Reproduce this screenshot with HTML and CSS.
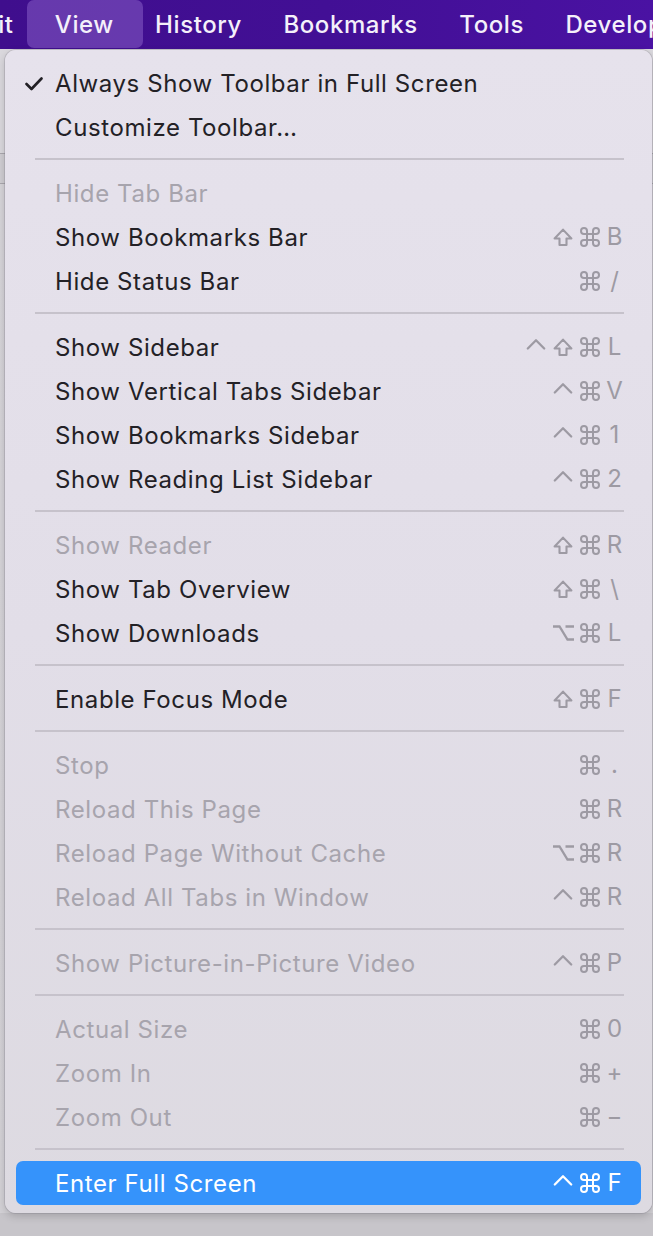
FILE: index.html
```html
<!DOCTYPE html>
<html lang="en">
<head>
<meta charset="utf-8">
<title>View menu</title>
<link rel="stylesheet" href="styles.css">
</head>
<body>
<svg width="0" height="0" class="defs">
  <defs>
    <symbol id="cmd" viewBox="2 2.5 20 19"><path d="M15 6v12a3 3 0 1 0 3-3H6a3 3 0 1 0 3 3V6a3 3 0 1 0-3 3h12a3 3 0 1 0-3-3z" fill="none" stroke="currentColor" stroke-width="2" stroke-linejoin="round"/></symbol>
    <symbol id="shift" viewBox="0 0 20 20"><path d="M6.5 18v-6.5H1.6L10 2.6l8.4 8.9h-4.9V18z" fill="none" stroke="currentColor" stroke-width="2.1" stroke-linejoin="round"/></symbol>
    <symbol id="ctrl" viewBox="0 0 20 20"><polyline points="1.8,11.5 10,3.3 18.2,11.5" fill="none" stroke="currentColor" stroke-width="2.3" stroke-linecap="round" stroke-linejoin="round"/></symbol>
    <symbol id="opt" viewBox="0 0 23 20"><path d="M1 3.5h6.5l8 13H22M13.5 3.5H22" fill="none" stroke="currentColor" stroke-width="2.3" stroke-linejoin="miter"/></symbol>
    <symbol id="check" viewBox="0 0 18 14"><polyline points="1.5,7 6.5,12 16.5,1.5" fill="none" stroke="currentColor" stroke-width="2.6" stroke-linecap="round" stroke-linejoin="round"/></symbol>
  </defs>
</svg>

<header class="menubar">
  <span class="mb-item mb-edit">Edit</span>
  <span class="mb-item mb-active">View</span>
  <span class="mb-item">History</span>
  <span class="mb-item">Bookmarks</span>
  <span class="mb-item">Tools</span>
  <span class="mb-item">Develop</span>
</header>

<main class="desk">
  <div class="menu">
    <div class="row"><span class="chk"><svg class="check"><use href="#check"/></svg></span><span class="label">Always Show Toolbar in Full Screen</span><span class="sc"></span></div>
    <div class="row"><span class="chk"></span><span class="label">Customize Toolbar…</span><span class="sc"></span></div>
    <div class="sep"></div>
    <div class="row dis"><span class="chk"></span><span class="label">Hide Tab Bar</span><span class="sc"></span></div>
    <div class="row"><span class="chk"></span><span class="label">Show Bookmarks Bar</span><span class="sc"><span class="mods"><svg class="m"><use href="#shift"/></svg><svg class="m"><use href="#cmd"/></svg></span><span class="key">B</span></span></div>
    <div class="row"><span class="chk"></span><span class="label">Hide Status Bar</span><span class="sc"><span class="mods"><svg class="m"><use href="#cmd"/></svg></span><span class="key">/</span></span></div>
    <div class="sep"></div>
    <div class="row"><span class="chk"></span><span class="label">Show Sidebar</span><span class="sc"><span class="mods"><svg class="m"><use href="#ctrl"/></svg><svg class="m"><use href="#shift"/></svg><svg class="m"><use href="#cmd"/></svg></span><span class="key">L</span></span></div>
    <div class="row"><span class="chk"></span><span class="label">Show Vertical Tabs Sidebar</span><span class="sc"><span class="mods"><svg class="m"><use href="#ctrl"/></svg><svg class="m"><use href="#cmd"/></svg></span><span class="key">V</span></span></div>
    <div class="row"><span class="chk"></span><span class="label">Show Bookmarks Sidebar</span><span class="sc"><span class="mods"><svg class="m"><use href="#ctrl"/></svg><svg class="m"><use href="#cmd"/></svg></span><span class="key">1</span></span></div>
    <div class="row"><span class="chk"></span><span class="label">Show Reading List Sidebar</span><span class="sc"><span class="mods"><svg class="m"><use href="#ctrl"/></svg><svg class="m"><use href="#cmd"/></svg></span><span class="key">2</span></span></div>
    <div class="sep"></div>
    <div class="row dis"><span class="chk"></span><span class="label">Show Reader</span><span class="sc"><span class="mods"><svg class="m"><use href="#shift"/></svg><svg class="m"><use href="#cmd"/></svg></span><span class="key">R</span></span></div>
    <div class="row"><span class="chk"></span><span class="label">Show Tab Overview</span><span class="sc"><span class="mods"><svg class="m"><use href="#shift"/></svg><svg class="m"><use href="#cmd"/></svg></span><span class="key">\</span></span></div>
    <div class="row"><span class="chk"></span><span class="label">Show Downloads</span><span class="sc"><span class="mods"><svg class="m opt"><use href="#opt"/></svg><svg class="m"><use href="#cmd"/></svg></span><span class="key">L</span></span></div>
    <div class="sep"></div>
    <div class="row"><span class="chk"></span><span class="label">Enable Focus Mode</span><span class="sc"><span class="mods"><svg class="m"><use href="#shift"/></svg><svg class="m"><use href="#cmd"/></svg></span><span class="key">F</span></span></div>
    <div class="sep"></div>
    <div class="row dis"><span class="chk"></span><span class="label">Stop</span><span class="sc"><span class="mods"><svg class="m"><use href="#cmd"/></svg></span><span class="key">.</span></span></div>
    <div class="row dis"><span class="chk"></span><span class="label">Reload This Page</span><span class="sc"><span class="mods"><svg class="m"><use href="#cmd"/></svg></span><span class="key">R</span></span></div>
    <div class="row dis"><span class="chk"></span><span class="label">Reload Page Without Cache</span><span class="sc"><span class="mods"><svg class="m opt"><use href="#opt"/></svg><svg class="m"><use href="#cmd"/></svg></span><span class="key">R</span></span></div>
    <div class="row dis"><span class="chk"></span><span class="label">Reload All Tabs in Window</span><span class="sc"><span class="mods"><svg class="m"><use href="#ctrl"/></svg><svg class="m"><use href="#cmd"/></svg></span><span class="key">R</span></span></div>
    <div class="sep"></div>
    <div class="row dis"><span class="chk"></span><span class="label">Show Picture-in-Picture Video</span><span class="sc"><span class="mods"><svg class="m"><use href="#ctrl"/></svg><svg class="m"><use href="#cmd"/></svg></span><span class="key">P</span></span></div>
    <div class="sep"></div>
    <div class="row dis"><span class="chk"></span><span class="label">Actual Size</span><span class="sc"><span class="mods"><svg class="m"><use href="#cmd"/></svg></span><span class="key">0</span></span></div>
    <div class="row dis"><span class="chk"></span><span class="label">Zoom In</span><span class="sc"><span class="mods"><svg class="m"><use href="#cmd"/></svg></span><span class="key">+</span></span></div>
    <div class="row dis"><span class="chk"></span><span class="label">Zoom Out</span><span class="sc"><span class="mods"><svg class="m"><use href="#cmd"/></svg></span><span class="key">−</span></span></div>
    <div class="sep"></div>
    <div class="row hl"><span class="chk"></span><span class="label">Enter Full Screen</span><span class="sc"><span class="mods"><svg class="m"><use href="#ctrl"/></svg><svg class="m"><use href="#cmd"/></svg></span><span class="key">F</span></span></div>
  </div>
</main>
</body>
</html>
```

FILE: styles.css
```css
* { box-sizing: border-box; }

html, body {
  margin: 0;
  padding: 0;
  width: 653px;
  height: 1236px;
  overflow: hidden;
}

body {
  font-family: "Inter", "Noto Sans", "Liberation Sans", sans-serif;
  background: #c9c7cc;
}

.defs { position: absolute; width: 0; height: 0; }

.menubar {
  height: 49px;
  display: flex;
  align-items: stretch;
  background: linear-gradient(90deg, #3f0e8d 0%, #420f95 50%, #4a12a3 100%);
  color: #f4f0fa;
  font-size: 24px;
  font-weight: 500;
  white-space: nowrap;
  padding-bottom: 1px;
  overflow: hidden;
}

.mb-item {
  display: flex;
  align-items: center;
  padding: 0 20.7px;
  letter-spacing: 0.6px;
}

.mb-edit {
  margin-left: -53px;
}

.mb-active {
  padding: 0 29.5px 0 28px;
  margin: 0 -9px 0 -7.5px;
  background: rgba(150, 110, 210, 0.45);
  border-radius: 7px;
}

.desk {
  height: 1187px;
  background:
    linear-gradient(180deg, #dad8dd 0, #dad8dd 104px, #a9a7ad 104px, #a9a7ad 105px, #cfcdd2 105px, #cfcdd2 134px, #a9a7ad 134px, #a9a7ad 135px, #d6d4d9 135px, #d3d1d6 1164px, #c7c5ca 1164px);
  padding-top: 1px;
}

.menu {
  margin-left: 5px;
  width: 647px;
  padding: 11px 11px 8px 11px;
  background: linear-gradient(180deg, #e6e2ec 0%, #e2dee8 50%, #dddae1 100%);
  border-radius: 11px;
  box-shadow: 0 0 0 1px rgba(120, 115, 130, 0.25), 0 3px 8px rgba(0, 0, 0, 0.18);
  font-size: 24px;
  color: #232126;
}

.row {
  height: 44px;
  display: flex;
  align-items: center;
  padding-right: 18px;
  border-radius: 7px;
  white-space: nowrap;
}

.chk {
  width: 39px;
  flex: none;
  display: flex;
  align-items: center;
  padding-left: 9px;
  color: #222025;
}

.check {
  width: 18px;
  height: 14px;
  margin-top: 1px;
}

.label {
  flex: 1;
  letter-spacing: 0.6px;
}

.dis .label { color: #a7a4ad; }

.sc {
  display: flex;
  align-items: center;
  color: #9d9aa3;
}

.mods {
  display: flex;
  align-items: center;
  gap: 7px;
}

.m {
  width: 20px;
  height: 20px;
  display: block;
}

.m.opt {
  width: 23px;
  margin-right: -2px;
}

.key {
  width: 17px;
  margin-left: 6px;
  text-align: center;
  line-height: 1;
}

.sep {
  height: 2px;
  margin: 9px 17px 11px 19px;
  background: #c6c2cb;
}

.row.hl {
  background: #3593fb;
  color: #ffffff;
}

.row.hl .sc { color: #ffffff; }
```
